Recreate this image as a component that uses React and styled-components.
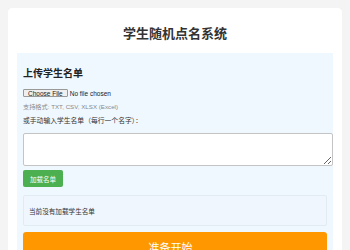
import React, { useState } from "react";
import styled, { createGlobalStyle } from "styled-components";

var Global = createGlobalStyle`
	body {
		margin: 8px;
		background: #f4f4f4;
		font-family: "Liberation Sans", "Noto Sans CJK SC", sans-serif;
		color: #333;
	}
`;

var Card = styled.div`
	background: #fff;
	border-radius: 4px;
	box-shadow: 0 1px 4px rgba(0, 0, 0, 0.08);
	padding: 9px 9px 20px;
`;

var Title = styled.h1`
	margin: 9px 0 11px;
	font-size: 13px;
	line-height: 16px;
	font-weight: bold;
	text-align: center;
	color: #333;
`;

var Section = styled.div`
	background: #f0f8ff;
	padding: 6px 6px 10px;
`;

var Heading = styled.h3`
	margin: 9px 0 8px;
	font-size: 10px;
	line-height: 12px;
	font-weight: bold;
	color: #222;
`;

var FileRow = styled.div`
	height: 10px;
	display: flex;
	align-items: center;
	input {
		font-family: "Liberation Sans", sans-serif;
		font-size: 6.5px;
		color: #222;
	}
	input::file-selector-button {
		font-family: "Liberation Sans", sans-serif;
		font-size: 6.5px;
		padding: 0 4px;
		height: 8px;
		margin-right: 2px;
		border: 1px solid #999;
		border-radius: 1px;
		background: #efefef;
		color: #222;
	}
`;

var Hint = styled.p`
	margin: 5px 0 0;
	font-size: 6.2px;
	line-height: 8px;
	color: #888;
`;

var Label = styled.p`
	margin: 6px 0 8px;
	font-size: 6.8px;
	line-height: 8px;
	color: #333;
`;

var Names = styled.textarea`
	display: block;
	width: 100%;
	height: 27px;
	padding: 2px;
	margin: 0;
	border: 1px solid #c4c4c4;
	border-radius: 2px;
	background: #fff;
	font-size: 7px;
`;

var Button = styled.button`
	display: block;
	margin-top: 4px;
	height: 17px;
	padding: 0 7px;
	border: none;
	border-radius: 2px;
	background: #4caf50;
	color: #fff;
	font-family: "Liberation Sans", "Noto Sans CJK SC", sans-serif;
	font-size: 6.5px;
	cursor: pointer;
`;

var Status = styled.div`
	margin-top: 8px;
	height: 31px;
	box-sizing: border-box;
	display: flex;
	align-items: center;
	padding: 0 5px;
	background: #f0f6fd;
	border: 1px solid #e2eaf2;
	border-radius: 2px;
	font-size: 6.6px;
	color: #333;
`;

var Start = styled.button`
	display: block;
	width: 100%;
	margin-top: 6px;
	height: 30px;
	border: none;
	border-radius: 3px;
	background: #ff9800;
	color: #fff;
	font-family: "Liberation Sans", "Noto Sans CJK SC", sans-serif;
	font-size: 11px;
	cursor: pointer;
`;

export default function App() {
	const [text, setText] = useState("");
	return (
		<>
			<Global />
			<Card>
				<Title>学生随机点名系统</Title>
				<Section>
					<Heading>上传学生名单</Heading>
					<FileRow>
						<input type="file" accept=".txt,.csv,.xlsx" />
					</FileRow>
					<Hint>支持格式: TXT, CSV, XLSX (Excel)</Hint>
					<Label>或手动输入学生名单（每行一个名字）：</Label>
					<Names value={text} onChange={(e) => setText(e.target.value)} />
					<Button>加载名单</Button>
					<Status>当前没有加载学生名单</Status>
					<Start>准备开始...</Start>
				</Section>
			</Card>
		</>
	);
}
